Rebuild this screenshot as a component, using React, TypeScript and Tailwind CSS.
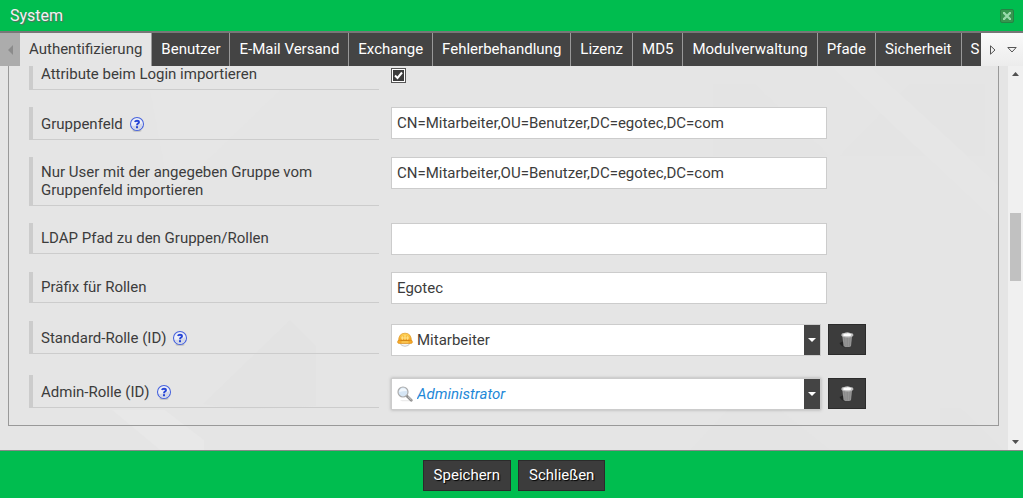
import { useState } from "react";
import type { ReactNode } from "react";

const tabs = [
  "Authentifizierung", "Benutzer", "E-Mail Versand", "Exchange", "Fehlerbehandlung",
  "Lizenz", "MD5", "Modulverwaltung", "Pfade", "Sicherheit", "S",
];

/* ── Icons ── */
function HelpIcon() {
  return (
    <svg width="16" height="16" viewBox="0 0 16 16" aria-hidden="true">
      <ellipse cx="8" cy="14.8" rx="4.5" ry="1" fill="#bdbdbd" />
      <circle cx="8" cy="8" r="6.5" fill="#eef0f8" stroke="#4763dc" strokeWidth="1.1" />
      <path d="M2.6 9.5 A5.5 5.5 0 0 0 13.4 7 Q8 10.5 2.6 9.5Z" fill="#d3d7e6" />
      <path d="M5.8 5.9 Q6.4 4.7 8 4.7 Q10 4.7 10 6.2 Q10 7.1 8.9 7.7 Q8 8.2 8 9.3" fill="none" stroke="#2746d6" strokeWidth="1.9" />
      <rect x="7" y="10.2" width="2" height="2" fill="#2746d6" />
    </svg>
  );
}

function HelmetIcon() {
  return (
    <svg width="16" height="16" viewBox="0 0 16 16" aria-hidden="true">
      <defs>
        <linearGradient id="helmet" x1="0" y1="0" x2="0" y2="1">
          <stop offset="0" stopColor="#ffd75a" />
          <stop offset="1" stopColor="#f29a1c" />
        </linearGradient>
      </defs>
      <path d="M3 11 Q4 14.3 8 14.3 Q12 14.3 13 11Z" fill="#f5f5f5" stroke="#bdbdbd" strokeWidth="0.8" />
      <path d="M1.6 9.5 Q1.4 1.2 8 1.2 Q14.6 1.2 14.4 9.5Z" fill="url(#helmet)" stroke="#dc941d" strokeWidth="0.7" />
      <path d="M5.3 8.5 V4.2 M8 8.5 V3 M10.7 8.5 V4.2 M4 6 H12" stroke="#ffe993" strokeWidth="0.9" />
      <rect x="0.6" y="8.4" width="14.8" height="3" rx="1.3" fill="#f7ac2b" stroke="#d98913" strokeWidth="0.6" />
      <path d="M3.5 8.6 H12.5" stroke="#cd7f12" strokeWidth="0.8" />
      <path d="M4.5 10 H11.5" stroke="#ffe07a" strokeWidth="0.9" />
    </svg>
  );
}

function SearchIcon() {
  return (
    <svg width="16" height="16" viewBox="0 0 16 16" aria-hidden="true">
      <path d="M3 14 H13 L14 15.2 H5Z" fill="#ececec" />
      <path d="M9.6 9.8 L14.3 14.3" stroke="#8c8c8c" strokeWidth="2.6" strokeLinecap="round" />
      <path d="M11.2 10.8 L14.2 13.7" stroke="#dadada" strokeWidth="0.9" strokeLinecap="round" />
      <circle cx="6" cy="6" r="5" fill="#d6e6f5" stroke="#acacac" strokeWidth="1.2" />
      <path d="M2.2 6 Q2.5 2.3 6 2.2 Q9.5 2.3 9.8 5 Q6 5 2.2 6Z" fill="#f2f8fd" />
    </svg>
  );
}

function TrashIcon() {
  return (
    <svg width="16" height="16" viewBox="0 0 16 16" aria-hidden="true">
      <path d="M0.5 11 L5 9 L6 15.4 Q2 14.5 0.5 11Z" fill="#242424" />
      <path d="M3.2 3 H13.2 L12 14.2 Q8.2 16 4.6 14.2Z" fill="#969696" />
      <path d="M5.4 5 L6.2 14 M8.3 5 V14.5 M11.1 5 L10.4 14" stroke="#858585" strokeWidth="0.7" />
      <path d="M2.2 3.2 Q2.4 0.7 5.2 1 Q8.2 -0.2 11.2 0.9 Q14.6 1 14.4 3.4 Q13 5.4 8.2 5.4 Q3.4 5.4 2.2 3.2Z" fill="#bcbcbc" />
      <path d="M3.8 3.3 Q5 1.2 7 1.7 Q9 0.7 12.6 2.4 Q12 4.4 8.2 4.3 Q5 4.6 3.8 3.3Z" fill="#ffffff" />
    </svg>
  );
}

/* ── Faceted background ── */
function Backdrop() {
  return (
    <svg className="absolute inset-0 w-full h-full" viewBox="0 0 1023 384" preserveAspectRatio="none" aria-hidden="true">
      <path d="M112 344 L165 344 L204 374 L204 384 L160 384Z" fill="#e8e8e8" />
      <path d="M203 338 L290 254 L316 280 L316 340 L240 344Z" fill="#e3e3e3" />
      <path d="M713 18 L755 18 L830 90 L713 90Z" fill="#e4e4e4" />
      <path d="M910 18 L985 18 L985 90 L840 90Z" fill="#e4e4e4" />
      <path d="M830 0 L870 0 L1000 120 L1000 160Z" fill="#e6e6e6" />
      <path d="M690 384 L750 320 L830 384Z" fill="#e4e4e4" />
      <path d="M940 342 L960 342 L1003 384 L940 384Z" fill="#e4e4e4" />
      <path d="M150 24 L280 24 L170 130Z" fill="#e6e6e6" />
    </svg>
  );
}

function Row({ id, label, help, children }: { id: string; label: string; help?: boolean; children: ReactNode }) {
  return (
    <div className="flex items-start gap-3">
      <div
        className={`w-[350px] shrink-0 flex items-center gap-1.5 border-l-4 border-b border-[#cccccc] pl-2 ${
          help ? "pt-[7px] pb-[5px] leading-5" : "py-1.5 leading-[18px]"
        }`}
      >
        <label htmlFor={id}>{label}</label>
        {help && (
          <button type="button" aria-label={`Hilfe zu ${label}`}>
            <HelpIcon />
          </button>
        )}
      </div>
      {children}
    </div>
  );
}

function TextField({ id, value }: { id: string; value: string }) {
  const [text, setText] = useState(value);
  return (
    <input
      id={id}
      type="text"
      value={text}
      onChange={(e) => setText(e.target.value)}
      className="w-[436px] h-8 border border-[#cccccc] bg-white px-[5px] outline-none"
    />
  );
}

function RoleField({ id, value, icon, active }: { id: string; value: string; icon: ReactNode; active?: boolean }) {
  return (
    <div className="flex gap-[7px] pt-[3px] pb-0.5">
      <div className={`relative w-[430px] h-8 border border-[#cccccc] bg-white ${active ? "shadow-[0_0_3px_#aaaaaa]" : ""}`}>
        <select
          id={id}
          defaultValue={value}
          className={`appearance-none w-full h-full pl-[25px] pr-5 outline-none ${active ? "italic text-[#1e88d8]" : ""}`}
        >
          <option>{value}</option>
        </select>
        <span className="absolute left-[5px] top-[7px] pointer-events-none">{icon}</span>
        <span className="absolute right-0 inset-y-0 w-4 bg-[#444444] flex items-center justify-center pointer-events-none">
          <svg width="8" height="4" viewBox="0 0 8 4" aria-hidden="true">
            <path d="M0 0H8L4 4Z" fill="#ffffff" />
          </svg>
        </span>
      </div>
      <button
        type="button"
        aria-label={`${value} entfernen`}
        className="w-[38px] h-[31px] bg-[#3c3c3c] border border-[#2b2b2b] flex items-center justify-center"
      >
        <TrashIcon />
      </button>
    </div>
  );
}

export default function App() {
  const [active, setActive] = useState(tabs[0]);
  const [importAttributes, setImportAttributes] = useState(true);

  return (
    <div className="h-screen flex flex-col overflow-hidden bg-[#e5e5e5] text-[#3c3c3c] text-[15px] font-['Roboto',sans-serif]">
      {/* Title bar */}
      <header className="h-[33px] shrink-0 flex items-center justify-between pl-2.5 pr-[9px] bg-[#00bd4f] border-b-2 border-[#777777]">
        <h1 className="text-base text-[#f2f2f2] [text-shadow:1px_1px_1px_#666666]">System</h1>
        <button type="button" aria-label="Fenster schließen">
          <svg width="14" height="14" viewBox="0 0 14 14" aria-hidden="true">
            <rect x="0.5" y="0.5" width="13" height="13" rx="1.5" fill="#37964f" stroke="#258344" />
            <path d="M4 4 L10 10 M10 4 L4 10" stroke="#98d9aa" strokeWidth="2.4" />
            <path d="M3 3h2v2H3z M9 3h2v2H9z M3 9h2v2H3z M9 9h2v2H9z" fill="#98d9aa" />
          </svg>
        </button>
      </header>

      {/* Tabs */}
      <nav className="h-[33px] shrink-0 flex bg-[#444444]">
        <button type="button" aria-label="Tabs zurück" className="w-5 shrink-0 bg-[#acacac] flex items-center justify-center">
          <svg width="5" height="10" viewBox="0 0 5 10" aria-hidden="true">
            <path d="M5 0V10L0 5Z" fill="#8b8b8b" />
          </svg>
        </button>
        <div role="tablist" className="flex-1 min-w-0 flex overflow-hidden">
          {tabs.map((t) => (
            <button
              key={t}
              type="button"
              role="tab"
              aria-selected={active === t}
              onClick={() => setActive(t)}
              className={`shrink-0 px-[9px] border-r border-[#999999] ${
                active === t ? "bg-[#e5e5e5]" : "bg-[#444444] text-white"
              }`}
            >
              {t}
            </button>
          ))}
        </div>
        <div className="w-[42px] shrink-0 flex items-center justify-between pl-[9px] pr-1.5 bg-linear-to-b from-[#fafafa] to-[#ececec]">
          <button type="button" aria-label="Tabs weiter">
            <svg width="6" height="10" viewBox="0 0 6 10" aria-hidden="true">
              <path d="M0.5 0.8V9.2L5 5Z" fill="none" stroke="#555555" />
            </svg>
          </button>
          <button type="button" aria-label="Alle Tabs">
            <svg width="10" height="6" viewBox="0 0 10 6" aria-hidden="true">
              <path d="M0.8 0.5H9.2L5 5Z" fill="none" stroke="#555555" />
            </svg>
          </button>
        </div>
      </nav>

      {/* Settings */}
      <div className="relative flex-1 min-h-0 flex">
        <Backdrop />
        <main className="relative flex-1 min-w-0 overflow-hidden pl-2 pr-[9px]">
          <form className="-mt-[7px] flex flex-col gap-[17px] border border-t-0 border-[#999999] pl-5 pb-[13px]">
            <Row id="attributes" label="Attribute beim Login importieren">
              <span className="relative mt-[9px] size-[15px]">
                <input
                  id="attributes"
                  type="checkbox"
                  checked={importAttributes}
                  onChange={(e) => setImportAttributes(e.target.checked)}
                  className="appearance-none block size-[15px] border border-[#555555] bg-white checked:bg-[#3c3c3c] outline-1 -outline-offset-2 outline-white"
                />
                {importAttributes && (
                  <svg className="absolute inset-0 pointer-events-none" width="15" height="15" viewBox="0 0 15 15" aria-hidden="true">
                    <path d="M4 7.5 L6.5 10 L11 4.5" fill="none" stroke="#ffffff" strokeWidth="2" />
                  </svg>
                )}
              </span>
            </Row>
            <Row id="group" label="Gruppenfeld" help>
              <TextField id="group" value="CN=Mitarbeiter,OU=Benutzer,DC=egotec,DC=com" />
            </Row>
            <Row id="users" label="Nur User mit der angegeben Gruppe vom Gruppenfeld importieren">
              <TextField id="users" value="CN=Mitarbeiter,OU=Benutzer,DC=egotec,DC=com" />
            </Row>
            <Row id="path" label="LDAP Pfad zu den Gruppen/Rollen">
              <TextField id="path" value="" />
            </Row>
            <Row id="prefix" label="Präfix für Rollen">
              <TextField id="prefix" value="Egotec" />
            </Row>
            <Row id="default-role" label="Standard-Rolle (ID)" help>
              <RoleField id="default-role" value="Mitarbeiter" icon={<HelmetIcon />} />
            </Row>
            <Row id="admin-role" label="Admin-Rolle (ID)" help>
              <RoleField id="admin-role" value="Administrator" icon={<SearchIcon />} active />
            </Row>
          </form>
        </main>

        {/* Scroll bar */}
        <div className="relative w-[15px] shrink-0 flex flex-col items-center py-1.5 bg-[#f0f0f0]">
          <svg width="7" height="4" viewBox="0 0 7 4" aria-hidden="true">
            <path d="M0 4H7L3.5 0Z" fill="#505050" />
          </svg>
          <div className="flex-[137]" />
          <div className="w-[11px] h-[68px] bg-[#c1c1c1]" />
          <div className="flex-[159]" />
          <svg width="7" height="4" viewBox="0 0 7 4" aria-hidden="true">
            <path d="M0 0H7L3.5 4Z" fill="#505050" />
          </svg>
        </div>
      </div>

      {/* Actions */}
      <footer className="h-12 shrink-0 flex items-center justify-center gap-[7px] bg-[#00bd4f] border-t border-[#888888] pt-0.5 pl-[5px]">
        {["Speichern", "Schließen"].map((name) => (
          <button
            key={name}
            type="button"
            className="h-[31px] px-2.5 bg-[#3c3c3c] border border-[#2b2b2b] text-white [text-shadow:1px_1px_1px_#000000]"
          >
            {name}
          </button>
        ))}
      </footer>
    </div>
  );
}
